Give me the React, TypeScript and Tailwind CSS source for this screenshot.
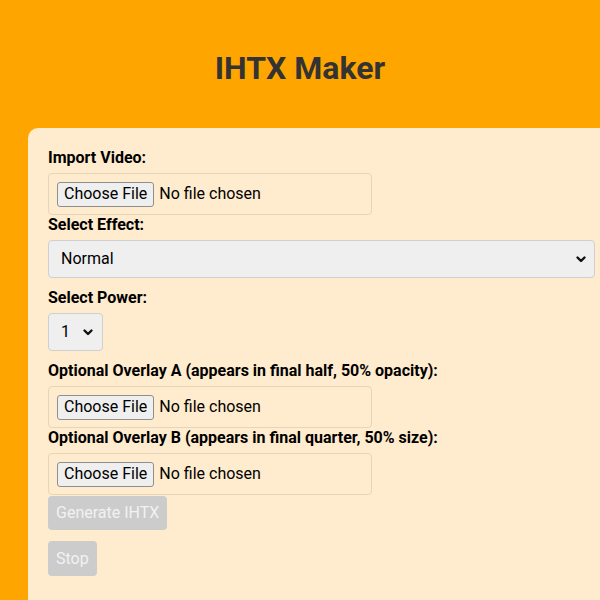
import React from 'react';

function Chevron() {
  return (
    <svg width="12" height="12" viewBox="0 0 12 12" className="shrink-0">
      <path d="M2.5 4.5 L6 8 L9.5 4.5" fill="none" stroke="#111" strokeWidth="2.4" strokeLinecap="round" strokeLinejoin="round" />
    </svg>
  );
}

function FileField() {
  return (
    <div className="flex h-[42px] w-[324px] items-center rounded-[4px] border border-[#e6d5b6] px-[8px]">
      <span className="flex h-[25px] items-center rounded-[3px] border border-[#8f8f8f] bg-[#efefef] px-[6px] text-[16px] text-black">
        Choose File
      </span>
      <span className="ml-[5px] text-[16px] text-black">No file chosen</span>
    </div>
  );
}

function Label({ children }: { children: React.ReactNode }) {
  return <div className="mb-[5px] h-[20px] text-[16px] font-bold leading-[20px] text-black">{children}</div>;
}

export default function App() {
  return (
    <div className="h-[600px] w-[600px] overflow-hidden bg-[#ffa500] font-['Roboto',sans-serif]">
      {/* Header */}
      <h1 className="pt-[47px] text-center text-[32px] font-bold leading-[42px] text-[#333]">IHTX Maker</h1>

      {/* Form card */}
      <div className="ml-[28px] mt-[39px] w-[620px] rounded-[10px] bg-[#ffebcd] p-[20px] pb-[40px]">
        <Label>Import Video:</Label>
        <FileField />

        <Label>Select Effect:</Label>
        <div className="mb-[10px] flex h-[38px] w-[547px] items-center justify-between rounded-[4px] border border-[#cfcfcf] bg-[#efefef] pl-[12px] pr-[7px] text-[16px] text-black">
          <span>Normal</span>
          <Chevron />
        </div>

        <Label>Select Power:</Label>
        <div className="mb-[10px] flex h-[38px] w-[55px] items-center justify-between rounded-[4px] border border-[#cfcfcf] bg-[#efefef] pl-[12px] pr-[8px] text-[16px] text-black">
          <span>1</span>
          <Chevron />
        </div>

        <Label>Optional Overlay A (appears in final half, 50% opacity):</Label>
        <FileField />

        <Label>Optional Overlay B (appears in final quarter, 50% size):</Label>
        <FileField />

        <div className="mt-[1px] flex flex-col items-start gap-[11px]">
          <button disabled className="h-[34px] rounded-[4px] bg-[#cccccc] px-[8px] text-[16px] text-[#f2f2f2]">
            Generate IHTX
          </button>
          <button disabled className="h-[35px] rounded-[4px] bg-[#cccccc] px-[8px] text-[16px] text-[#f2f2f2]">
            Stop
          </button>
        </div>
      </div>
    </div>
  );
}
